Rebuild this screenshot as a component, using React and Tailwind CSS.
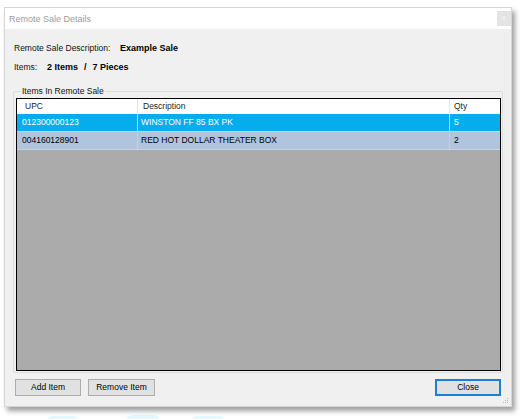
const ROWS = [
  { upc: "012300000123", desc: "WINSTON FF 85 BX PK", qty: "5", selected: true },
  { upc: "004160128901", desc: "RED HOT DOLLAR THEATER BOX", qty: "2", selected: false },
]

function ResizeGrip() {
  return (
    <svg width="7" height="7" viewBox="0 0 7 7" className="block">
      <rect x="5" y="1" width="1" height="1" fill="#b8b8b8" />
      <rect x="3" y="3" width="1" height="1" fill="#b8b8b8" />
      <rect x="5" y="3" width="1" height="1" fill="#b8b8b8" />
      <rect x="1" y="5" width="1" height="1" fill="#b8b8b8" />
      <rect x="3" y="5" width="1" height="1" fill="#b8b8b8" />
      <rect x="5" y="5" width="1" height="1" fill="#b8b8b8" />
    </svg>
  )
}

export default function App() {
  return (
    <div
      className="relative w-[527px] h-[419px] bg-white overflow-hidden pl-[4px] pt-[7px]"
      style={{ fontFamily: '"Liberation Sans", Arial, sans-serif' }}
    >
      {/* background blobs peeking under the dialog */}
      <div className="absolute left-[46px] top-[416px] w-[34px] h-[14px] rounded-full bg-[#e3f9ff]" />
      <div className="absolute left-[126px] top-[415px] w-[34px] h-[14px] rounded-full bg-[#e3f9ff]" />
      <div className="absolute left-[191px] top-[416px] w-[34px] h-[14px] rounded-full bg-[#e3f9ff]" />

      {/* Dialog window */}
      <div className="relative w-[508px] h-[400px] flex flex-col bg-[#f0f0f0] border border-[#d6d6d6] shadow-[3px_4px_5px_rgba(0,0,0,0.38)]">
        {/* Title bar */}
        <div className="h-[21px] bg-white flex items-start justify-between">
          <span className="pl-[4px] pt-[5px] text-[9px] leading-[12px] text-[#9c9c9c]">Remote Sale Details</span>
          <div className="mt-[3px] w-[14px] h-[15px] bg-[#e4e4e4] flex items-center justify-center text-[9px] leading-none text-[#f7f7f7]">
            ×
          </div>
        </div>

        {/* Body */}
        <div className="flex-1 flex flex-col pt-[13px] pb-[10px] text-[8.5px] text-[#111]">
          <div className="h-[12px] leading-[12px] flex pl-[9px]">
            <span className="w-[106px]">Remote Sale Description:</span>
            <span className="font-bold text-[9px] text-black">Example Sale</span>
          </div>
          <div className="h-[12px] leading-[12px] flex mt-[7px] pl-[9px] font-bold text-[9px] text-black">
            <span className="w-[33px] font-normal text-[8.5px] text-[#111]">Items:</span>
            <span>2 Items</span>
            <span className="mx-[6px]">/</span>
            <span>7 Pieces</span>
          </div>

          {/* Group box */}
          <fieldset className="mt-[12px] mx-[8px] flex-1 min-h-0 border border-[#dcdcdc] rounded-[2px] pl-[2px] pr-[1px] pb-[1px] flex flex-col">
            <legend className="ml-[5px] px-[1px] text-[8.5px] leading-[12px]">Items In Remote Sale</legend>

            {/* List view */}
            <div className="mt-[1px] flex-1 border border-black bg-[#ababab] flex flex-col">
              <div className="h-[15px] bg-white grid grid-cols-[121px_312px_1fr] text-[#1e1e1e] leading-[15px]">
                <div className="pl-[8px] border-r border-[#e5e5e5]">UPC</div>
                <div className="pl-[5px] border-r border-[#e5e5e5]">Description</div>
                <div className="pl-[4px]">Qty</div>
              </div>
              {ROWS.map(r => (
                <div
                  key={r.upc}
                  className={
                    r.selected
                      ? "h-[18px] grid grid-cols-[121px_312px_1fr] bg-[#05adec] text-white leading-[17px] border-b border-[#c9d4e2]"
                      : "h-[18px] grid grid-cols-[121px_312px_1fr] bg-[#b0c4de] text-black leading-[17px] border-b border-[#c9d4e2]"
                  }
                >
                  <div className="pl-[5px] border-r border-[#c3cfdd]">{r.upc}</div>
                  <div className="pl-[3px] border-r border-[#c3cfdd]">{r.desc}</div>
                  <div className="pl-[4px]">{r.qty}</div>
                </div>
              ))}
            </div>
          </fieldset>

          {/* Buttons */}
          <div className="mt-[6px] h-[17px] flex pl-[10px] pr-[10px]">
            <button className="w-[66px] h-[17px] bg-[#e1e1e1] border border-[#adadad] text-[8.5px] leading-none text-black">
              Add Item
            </button>
            <button className="ml-[7px] w-[67px] h-[17px] bg-[#e1e1e1] border border-[#adadad] text-[8.5px] leading-none text-black">
              Remove Item
            </button>
            <button className="ml-auto w-[66px] h-[17px] bg-[#e1e1e1] border-2 border-[#1c7fd6] text-[8.5px] leading-none text-black">
              Close
            </button>
          </div>
        </div>

        {/* Resize grip */}
        <div className="absolute right-[2px] bottom-[2px]">
          <ResizeGrip />
        </div>
      </div>
    </div>
  )
}
